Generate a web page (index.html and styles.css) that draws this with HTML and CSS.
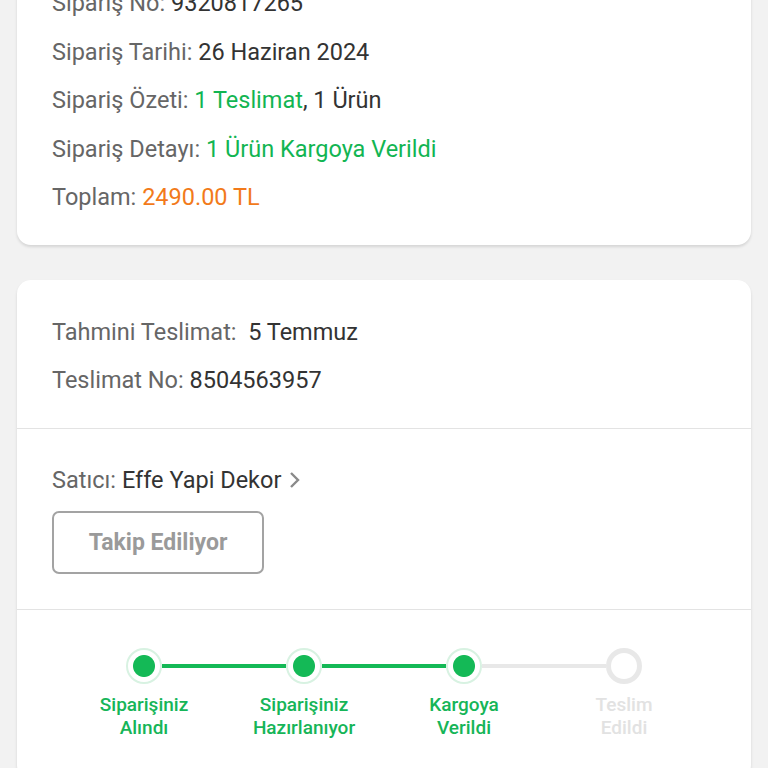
FILE: index.html
```html
<!DOCTYPE html>
<html lang="tr">
<head>
    <meta charset="UTF-8">
    <meta name="viewport" content="width=device-width, initial-scale=1.0">
    <title>Sipariş Detayı</title>
    <link rel="stylesheet" href="styles.css">
</head>
<body>
    <div class="page">
        <!-- Order summary (scrolled, top cut off) -->
        <div class="card order-card">
            <div class="section">
                <div class="row"><span class="label">Sipariş No:</span> <span class="value">9320817265</span></div>
                <div class="row"><span class="label">Sipariş Tarihi:</span> <span class="value">26 Haziran 2024</span></div>
                <div class="row"><span class="label">Sipariş Özeti:</span> <span class="value green">1 Teslimat</span><span class="value">, 1 Ürün</span></div>
                <div class="row"><span class="label">Sipariş Detayı:</span> <span class="value green">1 Ürün Kargoya Verildi</span></div>
                <div class="row"><span class="label">Toplam:</span> <span class="value orange">2490.00 TL</span></div>
            </div>
        </div>

        <!-- Delivery -->
        <div class="card">
            <div class="section">
                <div class="row"><span class="label">Tahmini Teslimat:</span>&nbsp; <span class="value">5 Temmuz</span></div>
                <div class="row"><span class="label">Teslimat No:</span> <span class="value">8504563957</span></div>
            </div>
            <div class="section seller">
                <div class="row">
                    <span class="label">Satıcı:</span> <span class="value">Effe Yapi Dekor</span><svg class="chevron" width="14" height="20" viewBox="0 0 14 20"><path d="M4 3 L11 10 L4 17" fill="none" stroke="#8a8a8a" stroke-width="2.4"/></svg>
                </div>
                <button class="follow-btn">Takip Ediliyor</button>
            </div>
            <div class="section stepper">
                <div class="track">
                    <span class="dot done"></span>
                    <span class="bar done"></span>
                    <span class="dot done"></span>
                    <span class="bar done"></span>
                    <span class="dot done"></span>
                    <span class="bar"></span>
                    <span class="dot"></span>
                </div>
                <div class="steps">
                    <div class="step done">Siparişiniz<br>Alındı</div>
                    <div class="step done">Siparişiniz<br>Hazırlanıyor</div>
                    <div class="step done">Kargoya<br>Verildi</div>
                    <div class="step">Teslim<br>Edildi</div>
                </div>
            </div>
        </div>
    </div>
</body>
</html>
```

FILE: styles.css
```css
body {
    margin: 0;
    padding: 0;
    background-color: #f2f2f2;
    font-family: Roboto, "Noto Sans", Arial, sans-serif;
    overflow: hidden;
}
.page {
    padding: 0 17px;
}
.card {
    background: #fff;
    border-radius: 14px;
    box-shadow: 0 2px 3px rgba(0, 0, 0, 0.12);
    margin-bottom: 35px;
    overflow: hidden;
}
.order-card {
    margin-top: -47px;
}
.section {
    padding: 28px 35px 23px;
    border-bottom: 1.5px solid #e3e3e3;
}
.order-card .section {
    padding: 26px 35px 23px;
}
.section:last-child {
    border-bottom: none;
}
.row {
    font-size: 23.5px;
    line-height: 48.5px;
    white-space: nowrap;
}
.label {
    color: #666;
}
.value {
    color: #333;
}
.green {
    color: #12b552;
}
.orange {
    color: #f27a1a;
}
.seller {
    padding: 27px 35px 35px;
}
.chevron {
    margin-left: 6px;
    vertical-align: -2px;
}
.follow-btn {
    display: block;
    margin-top: 7px;
    width: 212px;
    height: 63px;
    background: #fff;
    border: 2px solid #a3a3a3;
    border-radius: 7px;
    color: #9a9a9a;
    font-family: Roboto, "Noto Sans", Arial, sans-serif;
    font-size: 23px;
    font-weight: 700;
}
.stepper {
    padding: 38px 35px 40px;
}
.track {
    display: flex;
    align-items: center;
    justify-content: center;
}
.dot {
    width: 36px;
    height: 36px;
    border-radius: 50%;
    box-sizing: border-box;
    border: 5px solid #e8e8e8;
    background: #fff;
}
.dot.done {
    border: 2px solid #d8f2e2;
    background: radial-gradient(circle, #14b956 0 10.5px, #fff 11.5px);
}
.bar {
    width: 124px;
    height: 4px;
    background: #e8e8e8;
}
.bar.done {
    background: #14b956;
}
.steps {
    display: flex;
    justify-content: center;
    margin-top: 9px;
}
.step {
    width: 160px;
    text-align: center;
    font-size: 19px;
    font-weight: 500;
    line-height: 23px;
    color: #e2e2e2;
}
.step.done {
    color: #16b558;
}
```
